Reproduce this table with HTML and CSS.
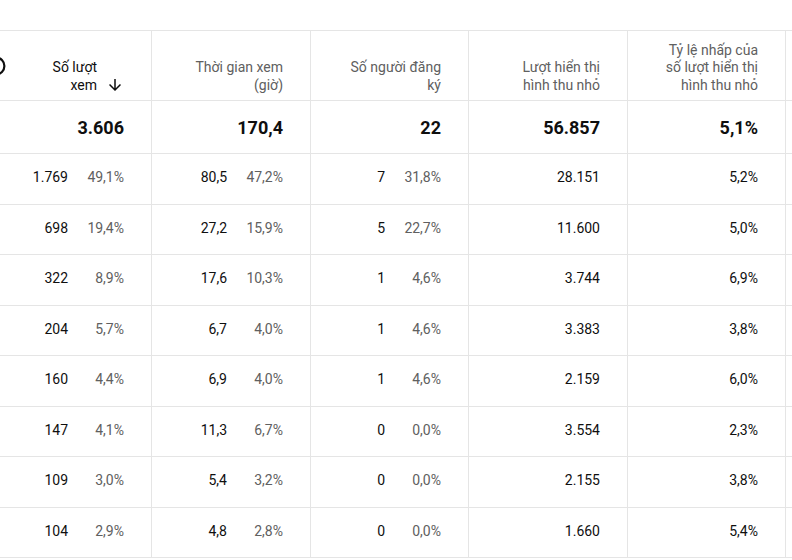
FILE: index.html
```html
<!DOCTYPE html>
<html lang="vi">
<head>
<meta charset="utf-8">
<title>Bảng số liệu</title>
<link rel="stylesheet" href="styles.css">
</head>
<body>
<div class="table">
  <div class="row head">
    <div class="cell first">
      <svg class="help" width="20" height="20" viewBox="0 0 20 20"><circle cx="10" cy="10" r="8.4" fill="none" stroke="#0f0f0f" stroke-width="2.2"/></svg>
      <span class="label sorted">Số lượt<br>xem</span>
      <svg class="arrow" width="18" height="18" viewBox="0 0 24 24"><path d="M20 12l-1.41-1.41L13 16.17V4h-2v12.17l-5.58-5.59L4 12l8 8 8-8z" fill="#0f0f0f"/></svg>
    </div>
    <div class="cell"><span class="label">Thời gian xem<br>(giờ)</span></div>
    <div class="cell"><span class="label">Số người đăng<br>ký</span></div>
    <div class="cell"><span class="label">Lượt hiển thị<br>hình thu nhỏ</span></div>
    <div class="cell"><span class="label">Tỷ lệ nhấp của<br>số lượt hiển thị<br>hình thu nhỏ</span></div>
    <div class="cell last"></div>
  </div>
  <div class="row total">
    <div class="cell">3.606</div>
    <div class="cell">170,4</div>
    <div class="cell">22</div>
    <div class="cell">56.857</div>
    <div class="cell">5,1%</div>
    <div class="cell last"></div>
  </div>
  <div class="row data">
    <div class="cell"><span class="val">1.769</span><span class="pct">49,1%</span></div>
    <div class="cell"><span class="val">80,5</span><span class="pct">47,2%</span></div>
    <div class="cell"><span class="val">7</span><span class="pct">31,8%</span></div>
    <div class="cell">28.151</div>
    <div class="cell">5,2%</div>
    <div class="cell last"></div>
  </div>
  <div class="row data">
    <div class="cell"><span class="val">698</span><span class="pct">19,4%</span></div>
    <div class="cell"><span class="val">27,2</span><span class="pct">15,9%</span></div>
    <div class="cell"><span class="val">5</span><span class="pct">22,7%</span></div>
    <div class="cell">11.600</div>
    <div class="cell">5,0%</div>
    <div class="cell last"></div>
  </div>
  <div class="row data">
    <div class="cell"><span class="val">322</span><span class="pct">8,9%</span></div>
    <div class="cell"><span class="val">17,6</span><span class="pct">10,3%</span></div>
    <div class="cell"><span class="val">1</span><span class="pct">4,6%</span></div>
    <div class="cell">3.744</div>
    <div class="cell">6,9%</div>
    <div class="cell last"></div>
  </div>
  <div class="row data">
    <div class="cell"><span class="val">204</span><span class="pct">5,7%</span></div>
    <div class="cell"><span class="val">6,7</span><span class="pct">4,0%</span></div>
    <div class="cell"><span class="val">1</span><span class="pct">4,6%</span></div>
    <div class="cell">3.383</div>
    <div class="cell">3,8%</div>
    <div class="cell last"></div>
  </div>
  <div class="row data">
    <div class="cell"><span class="val">160</span><span class="pct">4,4%</span></div>
    <div class="cell"><span class="val">6,9</span><span class="pct">4,0%</span></div>
    <div class="cell"><span class="val">1</span><span class="pct">4,6%</span></div>
    <div class="cell">2.159</div>
    <div class="cell">6,0%</div>
    <div class="cell last"></div>
  </div>
  <div class="row data">
    <div class="cell"><span class="val">147</span><span class="pct">4,1%</span></div>
    <div class="cell"><span class="val">11,3</span><span class="pct">6,7%</span></div>
    <div class="cell"><span class="val">0</span><span class="pct">0,0%</span></div>
    <div class="cell">3.554</div>
    <div class="cell">2,3%</div>
    <div class="cell last"></div>
  </div>
  <div class="row data">
    <div class="cell"><span class="val">109</span><span class="pct">3,0%</span></div>
    <div class="cell"><span class="val">5,4</span><span class="pct">3,2%</span></div>
    <div class="cell"><span class="val">0</span><span class="pct">0,0%</span></div>
    <div class="cell">2.155</div>
    <div class="cell">3,8%</div>
    <div class="cell last"></div>
  </div>
  <div class="row data">
    <div class="cell"><span class="val">104</span><span class="pct">2,9%</span></div>
    <div class="cell"><span class="val">4,8</span><span class="pct">2,8%</span></div>
    <div class="cell"><span class="val">0</span><span class="pct">0,0%</span></div>
    <div class="cell">1.660</div>
    <div class="cell">5,4%</div>
    <div class="cell last"></div>
  </div>
</div>
</body>
</html>
```
FILE: styles.css
```css
html, body {
  margin: 0;
  padding: 0;
  background: #ffffff;
  overflow: hidden;
}

body {
  font-family: Roboto, "Liberation Sans", sans-serif;
  font-size: 14px;
  color: #0f0f0f;
  width: 792px;
  height: 560px;
}

.table {
  padding-top: 30px;
}

.row {
  display: grid;
  grid-template-columns: 152px 159px 158px 159px 158px 1fr;
  border-bottom: 1px solid #e5e5e5;
  box-sizing: border-box;
}

.cell {
  display: flex;
  justify-content: flex-end;
  align-items: center;
  padding-right: 27px;
  border-right: 1px solid #e5e5e5;
  box-sizing: border-box;
  min-width: 0;
}

.cell.last {
  border-right: none;
  padding-right: 0;
}

.head {
  height: 71px;
  border-top: 1px solid #e5e5e5;
}

.head .cell {
  align-items: flex-end;
  padding-bottom: 6px;
}

.label {
  text-align: right;
  line-height: 17.5px;
  color: #606060;
}

.label.sorted {
  color: #0f0f0f;
}

.head .first {
  justify-content: flex-start;
}

.help {
  align-self: center;
  margin-left: -14.5px;
  margin-top: 6px;
  flex: none;
}

.head .first .label {
  margin-left: auto;
}

.arrow {
  flex: none;
  margin-left: 9px;
}

.total {
  height: 53px;
  font-size: 18px;
  font-weight: 700;
}

.data {
  height: 50.5px;
}

.data .cell {
  padding-bottom: 3px;
}

.val {
  text-align: right;
}

.pct {
  width: 56px;
  text-align: right;
  color: #606060;
  flex: none;
}
```
